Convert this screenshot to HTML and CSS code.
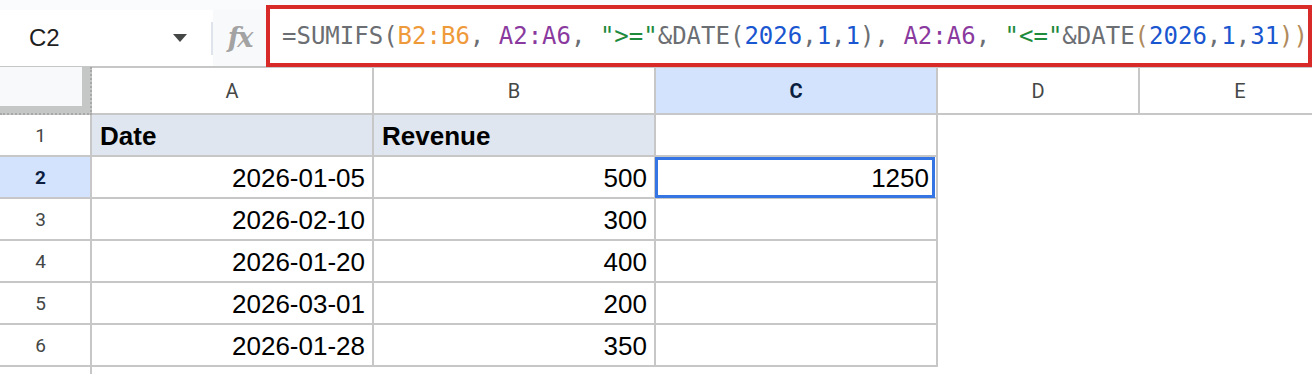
FILE: index.html
```html
<!DOCTYPE html>
<html lang="en">
<head>
  <meta charset="UTF-8" />
  <title>Sheet - SUMIFS</title>
  <link rel="stylesheet" href="styles.css">
</head>
<body>

  <div class="toolbar">
    <div class="nameBox">
      <span class="cellRef">C2</span>
      <svg class="caret" width="14" height="8" viewBox="0 0 14 8"><polygon points="0,0 14,0 7,8" fill="#444746"/></svg>
      <span class="divider"></span>
    </div>
    <div class="fxBox"><span class="fx">fx</span></div>
    <div class="formula"><span class="fn">=SUMIFS(</span><span class="r1">B2:B6</span><span class="fn">, </span><span class="r2">A2:A6</span><span class="fn">, </span><span class="str">"&gt;="</span><span class="fn">&amp;DATE(</span><span class="num">2026</span><span class="fn">,</span><span class="num">1</span><span class="fn">,</span><span class="num">1</span><span class="fn">), </span><span class="r2">A2:A6</span><span class="fn">, </span><span class="str">"&lt;="</span><span class="fn">&amp;DATE</span><span class="paren">(</span><span class="num">2026</span><span class="fn">,</span><span class="num">1</span><span class="fn">,</span><span class="num">31</span><span class="paren">))</span></div>
  </div>

  <div class="sheet">
    <!-- column headers -->
    <div class="corner"><div class="cornerInner"></div></div>
    <div class="colHead">A</div>
    <div class="colHead">B</div>
    <div class="colHead active">C</div>
    <div class="colHead">D</div>
    <div class="colHead">E</div>

    <!-- row 1 -->
    <div class="rowHead">1</div>
    <div class="cell head">Date</div>
    <div class="cell head">Revenue</div>
    <div class="cell"></div>
    <div class="blank"></div>
    <div class="blank"></div>

    <!-- row 2 -->
    <div class="rowHead active">2</div>
    <div class="cell num">2026-01-05</div>
    <div class="cell num">500</div>
    <div class="cell num selected">1250</div>
    <div class="blank"></div>
    <div class="blank"></div>

    <!-- row 3 -->
    <div class="rowHead">3</div>
    <div class="cell num">2026-02-10</div>
    <div class="cell num">300</div>
    <div class="cell"></div>
    <div class="blank"></div>
    <div class="blank"></div>

    <!-- row 4 -->
    <div class="rowHead">4</div>
    <div class="cell num">2026-01-20</div>
    <div class="cell num">400</div>
    <div class="cell"></div>
    <div class="blank"></div>
    <div class="blank"></div>

    <!-- row 5 -->
    <div class="rowHead">5</div>
    <div class="cell num">2026-03-01</div>
    <div class="cell num">200</div>
    <div class="cell"></div>
    <div class="blank"></div>
    <div class="blank"></div>

    <!-- row 6 -->
    <div class="rowHead">6</div>
    <div class="cell num">2026-01-28</div>
    <div class="cell num">350</div>
    <div class="cell"></div>
    <div class="blank"></div>
    <div class="blank"></div>

    <!-- row 7 (cut off) -->
    <div class="rowHead last"></div>
  </div>

</body>
</html>
```

FILE: styles.css
```css
* {
  box-sizing: border-box;
}

body {
  margin: 0;
  width: 1312px;
  height: 374px;
  overflow: hidden;
  background: #fff;
  font-family: 'Liberation Sans', Arial, sans-serif;
}

/* formula bar */
.toolbar {
  display: flex;
  height: 67px;
  background: #f9fbfd;
}

.nameBox {
  width: 214px;
  margin-top: 10px;
  background: #fff;
  border-bottom: 1px solid #c4c7c5;
  display: flex;
  align-items: center;
  padding-left: 29px;
}

.cellRef {
  font-family: 'Liberation Sans', Arial, sans-serif;
  font-size: 24px;
  color: #1f1f1f;
  width: 144px;
}

.caret {
  display: block;
}

.divider {
  width: 2px;
  height: 33px;
  background: #dfe4ec;
  margin-left: auto;
  margin-right: 0;
}

.fxBox {
  width: 53px;
  margin-top: 10px;
  background: #f8f9fa;
  border-bottom: 1px solid #c4c7c5;
  display: flex;
  align-items: center;
  justify-content: center;
}

.fx {
  font-family: 'DejaVu Serif', serif;
  font-style: italic;
  font-weight: bold;
  font-size: 27px;
  color: #a3a3a3;
  letter-spacing: -2px;
  margin-top: -2px;
}

.formula {
  flex: 1;
  margin-top: 5px;
  border: 4px solid #d92a2a;
  background: #fff;
  display: flex;
  align-items: center;
  padding-left: 12px;
  font-family: 'DejaVu Sans Mono', monospace;
  font-size: 24px;
  white-space: pre;
  color: #6b6e72;
}

.r1 { color: #ef9a3a; }
.r2 { color: #8a3a9e; }
.str { color: #1e8a3c; }
.num { color: #1a56d0; }
.paren { color: #b08a5c; }

/* grid */
.sheet {
  display: grid;
  grid-template-columns: 92px 282px 282px 282px 202px 202px;
  grid-template-rows: 48px repeat(6, 42px) 20px;
}

.corner {
  background: #c4c7c5;
  border-right: 2px dotted #a8a8a8;
  border-bottom: 2px dotted #a8a8a8;
}

.cornerInner {
  width: 82px;
  height: 39px;
  background: #f8f9fa;
}

.colHead {
  display: flex;
  align-items: center;
  justify-content: center;
  font-family: Roboto, sans-serif;
  font-size: 20px;
  color: #444746;
  border-right: 2px solid #c7c7c7;
  border-bottom: 2px solid #c7c7c7;
  border-top: 1px solid #c7c7c7;
}

.colHead.active {
  background: #d3e3fd;
  color: #0b1e3f;
  font-weight: bold;
}

.rowHead {
  display: flex;
  align-items: center;
  justify-content: center;
  padding-right: 9px;
  font-family: Roboto, sans-serif;
  font-size: 19px;
  color: #444746;
  border-right: 2px solid #c7c7c7;
  border-bottom: 2px solid #c7c7c7;
}

.rowHead.active {
  background: #d3e3fd;
  color: #0b1e3f;
  font-weight: bold;
}

.rowHead.last {
  border-bottom: none;
}

.cell {
  position: relative;
  display: flex;
  align-items: center;
  padding: 2px 7px 0 8px;
  font-size: 26px;
  color: #000;
  border-right: 2px solid #c7c7c7;
  border-bottom: 2px solid #c7c7c7;
}

.cell.head {
  background: #dfe6ef;
  font-weight: bold;
}

.cell.num {
  justify-content: flex-end;
  color: #000;
}

.cell.selected::after {
  content: '';
  position: absolute;
  top: 0;
  left: -1px;
  right: 1px;
  bottom: -1px;
  border: 3px solid #3574e3;
}
```
